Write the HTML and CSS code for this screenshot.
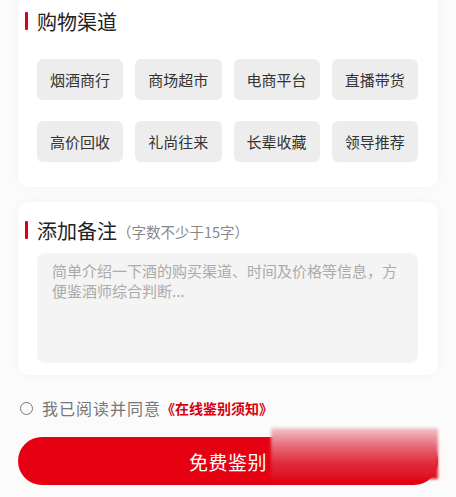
FILE: index.html
```html
<!DOCTYPE html>
<html lang="zh-CN">
<head>
    <meta charset="UTF-8">
    <meta name="viewport" content="width=device-width, initial-scale=1.0">
    <title>免费鉴别</title>
    <link rel="stylesheet" href="styles.css">
</head>
<body>
    <div class="page">

        <!-- 购物渠道 -->
        <section class="card card-channel">
            <h2 class="card-title">购物渠道</h2>
            <div class="tag-grid">
                <span class="tag">烟酒商行</span>
                <span class="tag">商场超市</span>
                <span class="tag">电商平台</span>
                <span class="tag">直播带货</span>
                <span class="tag">高价回收</span>
                <span class="tag">礼尚往来</span>
                <span class="tag">长辈收藏</span>
                <span class="tag">领导推荐</span>
            </div>
        </section>

        <!-- 添加备注 -->
        <section class="card card-note">
            <h2 class="card-title">添加备注<span class="card-hint">（字数不少于15字）</span></h2>
            <textarea class="note-input" placeholder="简单介绍一下酒的购买渠道、时间及价格等信息，方便鉴酒师综合判断..."></textarea>
        </section>

        <!-- 协议 -->
        <label class="agree">
            <span class="agree-check"></span>
            <span class="agree-text">我已阅读并同意</span>
            <span class="agree-link">《在线鉴别须知》</span>
        </label>

        <div class="submit-wrap">
            <button class="submit-btn">免费鉴别</button>
            <div class="submit-mask"></div>
        </div>

    </div>
</body>
</html>
```

FILE: styles.css
```css
/* General page styles */
body, html {
    margin: 0;
    padding: 0;
    background-color: #fbfbfb;
    font-family: "Noto Sans CJK SC", "Noto Sans", sans-serif;
    color: #222;
    overflow: hidden;
}

.page {
    padding: 0 18px;
}

/* Cards */
.card {
    background-color: #fff;
    border-radius: 10px;
    box-shadow: 0 0 8px rgba(0, 0, 0, 0.04);
    padding: 0 20px 25px 19px;
}

/* first card is scrolled so its top edge sits above the window */
.card-channel {
    margin-top: -12px;
    padding-top: 21px;
}

.card-note {
    margin-top: 15px;
    padding-top: 16px;
    padding-bottom: 12px;
}

.card-title {
    display: flex;
    align-items: center;
    margin: 0 0 0 -12px;
    height: 24px;
    font-size: 20px;
    font-weight: normal;
    color: #222;
}

.card-title::before {
    content: "";
    width: 3px;
    height: 18px;
    margin-right: 9px;
    border-radius: 1px;
    background-color: #d9001b;
}

.card-hint {
    font-size: 14.5px;
    color: #888;
    margin-top: 2px;
}

/* Channel tags */
.tag-grid {
    display: grid;
    grid-template-columns: repeat(4, 1fr);
    column-gap: 12px;
    row-gap: 21px;
    margin-top: 26px;
}

.tag {
    height: 41px;
    border-radius: 6px;
    background-color: #ededed;
    color: #333;
    font-size: 15px;
    display: flex;
    justify-content: center;
    align-items: center;
}

/* Note input */
.note-input {
    display: block;
    box-sizing: border-box;
    width: 100%;
    height: 110px;
    margin-top: 11px;
    padding: 8px 15px;
    border: none;
    border-radius: 8px;
    background-color: #f4f4f4;
    font-family: inherit;
    font-size: 15px;
    line-height: 20px;
    resize: none;
    outline: none;
}

.note-input::placeholder {
    color: #ababab;
}

/* Agreement row */
.agree {
    display: flex;
    align-items: center;
    height: 24px;
    margin-top: 21px;
    padding-left: 2px;
}

.agree-check {
    width: 11px;
    height: 11px;
    border: 1.5px solid #777;
    border-radius: 50%;
    margin-right: 9px;
}

.agree-text {
    font-size: 16px;
    letter-spacing: 1px;
    color: #777;
}

.agree-link {
    font-size: 14px;
    font-weight: bold;
    color: #d7000f;
}

/* Submit button */
.submit-wrap {
    position: relative;
    margin-top: 17px;
}

.submit-btn {
    display: block;
    width: 100%;
    height: 48px;
    border: none;
    border-radius: 24px;
    background-color: #e50012;
    color: #fff;
    font-family: inherit;
    font-size: 19px;
    letter-spacing: 0.5px;
}

/* blurred cover over the right part of the button */
.submit-mask {
    position: absolute;
    top: -9px;
    right: 0;
    width: 167px;
    height: 51px;
    background: linear-gradient(#f2c6ca, #e66b79 35%, #e02a3a 70%, #dd0f20);
    filter: blur(1.5px);
}
```
